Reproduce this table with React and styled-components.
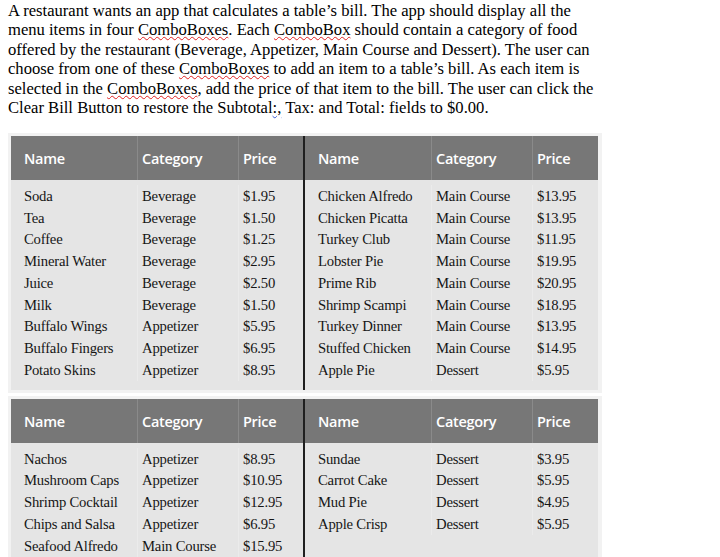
import styled, { createGlobalStyle } from "styled-components";

const GlobalStyle = createGlobalStyle`
  body {
    margin: 0;
    background: #ffffff;
  }
`;

const Page = styled.div`
  padding: 1px 8px 0 8px;
  width: 720px;
  height: 557px;
  overflow: hidden;
  box-sizing: border-box;
`;

const Intro = styled.p`
  margin: 0 0 16px 0;
  font-family: "Liberation Serif", "Times New Roman", serif;
  font-size: 16.6px;
  line-height: 19.4px;
  color: #000;
  white-space: nowrap;
`;

const Spell = styled.span`
  text-decoration: underline wavy ${(p) => (p.$grammar ? "#3b5bd6" : "#e02020")};
  text-decoration-thickness: 1px;
  text-underline-offset: 1px;
`;

const Frame = styled.div`
  width: 594px;
  background: #f2f2f2;
  padding: 3px 4px 3px 3px;
  box-sizing: border-box;
  display: flex;
  margin-bottom: 3px;
`;

const Half = styled.div`
  flex: ${(p) => (p.$left ? "0 0 292px" : "1")};
  border-right: ${(p) => (p.$left ? "2px solid #1f1f1f" : "none")};
  display: flex;
  flex-direction: column;
`;

const Row = styled.div`
  display: grid;
  grid-template-columns: 126px 101px 1fr;
`;

const HeadRow = styled(Row)`
  background: #777777;
  height: 44px;
`;

const HeadCell = styled.div`
  display: flex;
  align-items: center;
  padding-left: ${(p) => (p.$first ? "13px" : "4px")};
  padding-top: 1px;
  border-left: ${(p) => (p.$first ? "none" : "1px solid #8a8a8a")};
  font-family: "Open Sans", "Noto Sans", sans-serif;
  font-weight: 600;
  font-size: 14.5px;
  letter-spacing: -0.3px;
  color: #ffffff;
`;

const Body = styled.div`
  background: #e5e5e5;
  padding: 5px 0 ${(p) => p.$pad || "9px"} 0;
  flex: 1;
`;

const BodyRow = styled(Row)`
  height: 21.75px;
  align-items: center;
`;

const Cell = styled.div`
  padding-left: ${(p) => (p.$first ? "13px" : "4px")};
  border-left: ${(p) => (p.$first ? "none" : "1px solid #ebebeb")};
  height: 100%;
  display: flex;
  align-items: center;
  font-family: "Liberation Serif", "Times New Roman", serif;
  font-size: 14.7px;
  letter-spacing: -0.2px;
  color: #151515;
  white-space: nowrap;
`;

const tableOne = {
  left: [
    ["Soda", "Beverage", "$1.95"],
    ["Tea", "Beverage", "$1.50"],
    ["Coffee", "Beverage", "$1.25"],
    ["Mineral Water", "Beverage", "$2.95"],
    ["Juice", "Beverage", "$2.50"],
    ["Milk", "Beverage", "$1.50"],
    ["Buffalo Wings", "Appetizer", "$5.95"],
    ["Buffalo Fingers", "Appetizer", "$6.95"],
    ["Potato Skins", "Appetizer", "$8.95"],
  ],
  right: [
    ["Chicken Alfredo", "Main Course", "$13.95"],
    ["Chicken Picatta", "Main Course", "$13.95"],
    ["Turkey Club", "Main Course", "$11.95"],
    ["Lobster Pie", "Main Course", "$19.95"],
    ["Prime Rib", "Main Course", "$20.95"],
    ["Shrimp Scampi", "Main Course", "$18.95"],
    ["Turkey Dinner", "Main Course", "$13.95"],
    ["Stuffed Chicken", "Main Course", "$14.95"],
    ["Apple Pie", "Dessert", "$5.95"],
  ],
};

const tableTwo = {
  left: [
    ["Nachos", "Appetizer", "$8.95"],
    ["Mushroom Caps", "Appetizer", "$10.95"],
    ["Shrimp Cocktail", "Appetizer", "$12.95"],
    ["Chips and Salsa", "Appetizer", "$6.95"],
    ["Seafood Alfredo", "Main Course", "$15.95"],
  ],
  right: [
    ["Sundae", "Dessert", "$3.95"],
    ["Carrot Cake", "Dessert", "$5.95"],
    ["Mud Pie", "Dessert", "$4.95"],
    ["Apple Crisp", "Dessert", "$5.95"],
  ],
};

const MenuHalf = ({ rows, left, pad }) => (
  <Half $left={left}>
    <HeadRow>
      <HeadCell $first>Name</HeadCell>
      <HeadCell>Category</HeadCell>
      <HeadCell>Price</HeadCell>
    </HeadRow>
    <Body $pad={pad}>
      {rows.map((r) => (
        <BodyRow key={r[0]}>
          <Cell $first>{r[0]}</Cell>
          <Cell>{r[1]}</Cell>
          <Cell>{r[2]}</Cell>
        </BodyRow>
      ))}
    </Body>
  </Half>
);

const MenuTable = ({ data, pad }) => (
  <Frame>
    <MenuHalf rows={data.left} left pad={pad} />
    <MenuHalf rows={data.right} pad={pad} />
  </Frame>
);

const App = () => {
  return (
    <Page>
      <GlobalStyle />
      <Intro>
        A restaurant wants an app that calculates a table’s bill. The app should display all the
        <br />
        menu items in four <Spell>ComboBoxes</Spell>. Each <Spell>ComboBox</Spell> should contain a
        category of food
        <br />
        offered by the restaurant (Beverage, Appetizer, Main Course and Dessert). The user can
        <br />
        choose from one of these <Spell>ComboBoxes</Spell> to add an item to a table’s bill. As each
        item is
        <br />
        selected in the <Spell>ComboBoxes</Spell>, add the price of that item to the bill. The user
        can click the
        <br />
        Clear Bill Button to restore the Subtotal<Spell $grammar>:,</Spell> Tax: and Total: fields
        to $0.00.
      </Intro>
      <MenuTable data={tableOne} />
      <MenuTable data={tableTwo} pad="20px" />
    </Page>
  );
};

export default App;
